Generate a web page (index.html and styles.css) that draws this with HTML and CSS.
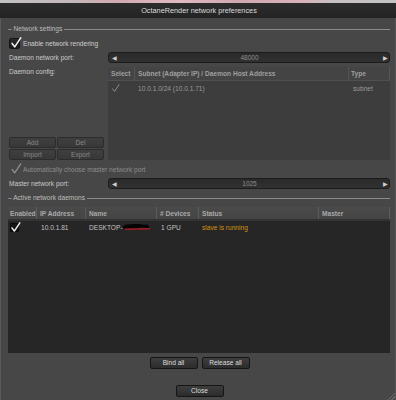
FILE: index.html
```html
<!DOCTYPE html>
<html>
<head>
<meta charset="utf-8">
<link rel="stylesheet" href="styles.css">
</head>
<body>
<div class="window">
  <div class="topstrip"></div>
  <div class="titlebar">OctaneRender network preferences</div>
  <div class="content">
    <div class="group-title g1"><span>– Network settings</span><i class="rule"></i></div>

    <div class="row check-row r-enable">
      <span class="cbox"><svg viewBox="0 0 14 14" class="tick"><path d="M2.5 7.5 L5.5 11.5 L12.5 1" /></svg></span>
      <span class="lbl">Enable network rendering</span>
    </div>

    <div class="row field-row r-port">
      <span class="flabel">Daemon network port:</span>
      <div class="slider"><span class="arr l">&#9664;</span><span class="val">48000</span><span class="arr r">&#9654;</span></div>
    </div>

    <div class="row r-config">
      <div class="config-left">
        <span class="flabel top">Daemon config:</span>
        <div class="btn-grid">
          <button class="sbtn">Add</button>
          <button class="sbtn">Del</button>
          <button class="sbtn">Import</button>
          <button class="sbtn">Export</button>
        </div>
      </div>
      <div class="ctable">
        <div class="chead">
          <span class="c-sel">Select</span>
          <span class="c-sub">Subnet (Adapter IP) / Daemon Host Address</span>
          <span class="c-type">Type</span>
        </div>
        <div class="crow">
          <span class="c-sel"><svg viewBox="0 0 14 14" class="tick dim"><path d="M2.5 7.5 L5.5 11.5 L12.5 1" /></svg></span>
          <span class="c-sub">10.0.1.0/24 (10.0.1.71)</span>
          <span class="c-type">subnet</span>
        </div>
      </div>
    </div>

    <div class="row check-row r-auto">
      <span class="cbox off"><svg viewBox="0 0 14 14" class="tick dim"><path d="M2.5 7.5 L5.5 11.5 L12.5 1" /></svg></span>
      <span class="lbl dimtext">Automatically choose master network port</span>
    </div>

    <div class="row field-row r-master">
      <span class="flabel">Master network port:</span>
      <div class="slider"><span class="arr l">&#9664;</span><span class="val">1025</span><span class="arr r">&#9654;</span></div>
    </div>

    <div class="group-title g2"><span>– Active network daemons</span><i class="rule"></i></div>

    <div class="atable">
      <div class="ahead">
        <span class="h-en">Enabled</span>
        <span>IP Address</span>
        <span>Name</span>
        <span># Devices</span>
        <span>Status</span>
        <span class="last">Master</span>
      </div>
      <div class="arow">
        <span class="a-en"><span class="mini-box"><svg viewBox="0 0 14 14" class="tick"><path d="M2.5 7.5 L5.5 11.5 L12.5 1" /></svg></span></span>
        <span>10.0.1.81</span>
        <span class="name">DESKTOP-<svg class="scribble" viewBox="0 0 28 7"><path d="M1 3 C4 0.5 8 2.5 11 1.2 S18 2.8 24 1.8" class="blk"/><path d="M2 3.6 C7 2.2 12 3.8 17 2.6 S23 3 25 2.8" class="blk"/><path d="M2 5.2 L27 4.8" class="red"/></svg></span>
        <span>1 GPU</span>
        <span class="status">slave is running</span>
        <span></span>
      </div>
    </div>

    <div class="btn-row">
      <button class="dbtn">Bind all</button>
      <button class="dbtn">Release all</button>
    </div>
    <div class="btn-row close-row">
      <button class="dbtn">Close</button>
    </div>
  </div>
  <div class="grip"></div>
</div>
</body>
</html>
```

FILE: styles.css
```css
* { box-sizing: border-box; }
html, body { margin: 0; padding: 0; }
body {
  width: 396px;
  height: 400px;
  overflow: hidden;
  background: #474747;
  font-family: "Liberation Sans", Arial, sans-serif;
  font-size: 6.6px;
  color: #c6c6c6;
}
.window {
  position: relative;
  width: 396px;
  height: 400px;
  background: #474747;
  border-left: 1px solid #5a5a5a;
  border-right: 1px solid #555;
}
.topstrip {
  height: 3px;
  margin: 0 -1px;
  background: linear-gradient(90deg, #c2c2c2 0, #c4b8ba 18%, #d2aab3 30%, #e0b9c2 45%, #cfa8b0 60%, #d8b2ba 75%, #c8c0c2 84%, #c4c4c4 100%);
}
.titlebar {
  height: 15px;
  margin: 0 -1px;
  line-height: 15px;
  text-align: center;
  background: linear-gradient(#2c2c2c, #242424);
  color: #dcdcdc;
  font-size: 7.3px;
  padding-left: 2px;
}
.content {
  padding: 0 5px 0 7px;
  display: flex;
  flex-direction: column;
}
.row { display: flex; align-items: center; }

.group-title {
  height: 10px;
  display: flex;
  align-items: center;
  color: #bdbdbd;
}
.group-title span { white-space: nowrap; padding-right: 2px; }
.group-title .rule {
  flex: 1;
  height: 1px;
  background: #8a8a8a;
  margin-top: 2px;
}
.g1 { margin-top: 5px; }
.g2 { margin-top: 3px; }

.check-row { height: 12px; }
.r-enable { margin-top: 4px; }
.cbox {
  position: relative;
  width: 11px;
  height: 11px;
  margin-left: 1px;
  background: linear-gradient(#2a2a2a, #1d1d1d);
  border: 1px solid #151515;
  border-radius: 2px;
  flex: none;
}
.cbox .tick {
  position: absolute;
  left: 0;
  top: -2px;
  width: 12px;
  height: 12px;
}
.cbox.off { background: #474747; border-color: #474747; }
.tick path {
  fill: none;
  stroke: #f4f4f4;
  stroke-width: 1.8;
  stroke-linecap: round;
  stroke-linejoin: round;
}
.tick.dim path { stroke: #8e8e8e; stroke-width: 1.5; }
.lbl { margin-left: 3px; color: #cfcfcf; }
.dimtext { color: #8c8c8c; }

.field-row { height: 11px; }
.r-port { margin-top: 3px; }
.r-master { margin-top: 3px; }
.flabel {
  width: 100px;
  flex: none;
  padding-left: 1px;
  color: #cacaca;
}
.slider {
  flex: 1;
  height: 11px;
  background: linear-gradient(#2a2a2a, #313131);
  border: 1px solid #1c1c1c;
  border-radius: 3px;
  display: flex;
  align-items: center;
  position: relative;
  color: #8f8f8f;
}
.slider .val {
  flex: 1;
  text-align: center;
  font-size: 6.5px;
}
.slider .arr {
  font-size: 5.5px;
  color: #d0d0d0;
  width: 8px;
  flex: none;
  text-align: center;
}
.slider .arr.l { margin-left: 1px; }

.r-config {
  margin-top: 4px;
  height: 93px;
  align-items: stretch;
}
.config-left {
  width: 100px;
  flex: none;
  display: flex;
  flex-direction: column;
  justify-content: space-between;
}
.flabel.top { line-height: 10px; }
.btn-grid {
  display: grid;
  grid-template-columns: 47px 47px;
  grid-auto-rows: 11px;
  gap: 1px;
  margin-left: 1px;
}
.sbtn {
  font-family: inherit;
  font-size: 6.5px;
  color: #8a8a8a;
  background: linear-gradient(#3f3f3f, #383838);
  border: 1px solid #2c2c2c;
  border-radius: 2px;
  padding: 0;
  height: 11px;
  line-height: 9px;
}
.ctable {
  flex: 1;
  background: #3d3d3d;
  display: flex;
  flex-direction: column;
}
.chead, .crow {
  display: grid;
  grid-template-columns: 27px 214px 1fr;
}
.chead {
  height: 14px;
  background: #444;
  border-bottom: 1px solid #505050;
  font-weight: bold;
  color: #9f9f9f;
}
.chead span {
  border-right: 1px solid #555;
  display: flex;
  align-items: center;
  padding-left: 3px;
}
.chead .c-type { padding-left: 2px; }
.crow { height: 14px; color: #9a9a9a; }
.crow span { display: flex; align-items: center; padding-left: 3px; }
.crow .c-sel .tick { width: 9px; height: 9px; }
.crow .c-type { padding-left: 4px; }

.r-auto { margin-top: 4px; height: 11px; }

.atable {
  margin-top: 5px;
  height: 146px;
  background: #262626;
  display: flex;
  flex-direction: column;
}
.ahead, .arow {
  display: grid;
  grid-template-columns: 29px 49px 71px 42px 120px 1fr;
}
.ahead {
  height: 14px;
  background: linear-gradient(#4a4a4a, #444);
  border-bottom: 2px solid #333;
  font-weight: bold;
  color: #a9a9a9;
}
.ahead span {
  border-right: 1px solid #5c5c5c;
  display: flex;
  align-items: center;
  padding-left: 3px;
}
.ahead .h-en { padding-left: 2px; }
.arow { height: 13px; color: #c3c3c3; }
.arow span { display: flex; align-items: center; padding-left: 4px; }
.arow .a-en { padding-left: 2px; }
.mini-box {
  position: relative;
  width: 9px;
  height: 9px;
  background: #151515;
  border: 1px solid #0c0c0c;
  padding: 0 !important;
}
.mini-box .tick { position: absolute; left: -1px; top: -2px; width: 11px; height: 11px; }
.arow .name { padding-left: 3px; }
.scribble { width: 28px; height: 7px; flex: none; }
.scribble .blk { fill: none; stroke: #050505; stroke-width: 2.6; stroke-linecap: round; }
.scribble .red { fill: none; stroke: #e0141e; stroke-width: 1; }
.arow .status { color: #d4930f; padding-left: 3px; }

.btn-row {
  display: flex;
  justify-content: center;
  gap: 4px;
  margin-top: 4px;
  padding-left: 1px;
}
.close-row { margin-top: 16px; }
.dbtn {
  font-family: inherit;
  font-size: 6.6px;
  color: #dedede;
  width: 48px;
  height: 12px;
  padding: 0;
  line-height: 10px;
  background: linear-gradient(#3e3e3e, #2c2c2c);
  border: 1px solid #151515;
  border-radius: 2px;
}
.grip {
  position: absolute;
  right: 0;
  bottom: 0;
  width: 7px;
  height: 7px;
  background: linear-gradient(135deg, transparent 45%, #6a6a6a 45%, #6a6a6a 55%, transparent 55%, transparent 70%, #6a6a6a 70%, #6a6a6a 80%, transparent 80%);
}
```
